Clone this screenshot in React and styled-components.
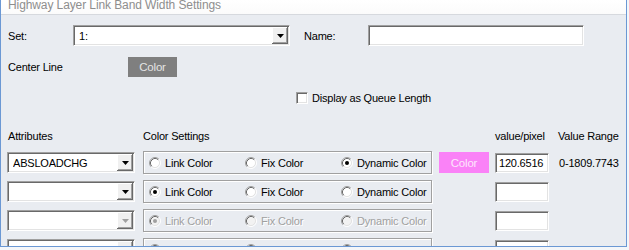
import React from "react";
import styled, { createGlobalStyle, css } from "styled-components";

const BG = "#e9ecf1";

const GlobalStyle = createGlobalStyle`
  html, body { margin: 0; padding: 0; }
  body {
    background: #f4f6f9;
    font-family: "Liberation Sans", Arial, sans-serif;
    font-size: 11px;
    letter-spacing: -0.2px;
    color: #000;
  }
`;

const Window = styled.div`
  box-sizing: border-box;
  width: 627px;
  height: 247px;
  border: 1px solid #6b98d4;
  border-top: none;
  display: flex;
  flex-direction: column;
  overflow: hidden;
`;

const TitleBar = styled.div`
  flex: 0 0 14px;
  height: 14px;
  overflow: hidden;
  padding-left: 7px;
  background: linear-gradient(#ffffff, #fbfbfb);
  border-bottom: 1px solid #d6d9de;
`;

const Title = styled.span`
  display: block;
  margin-top: -1px;
  font-size: 12px;
  line-height: 12px;
  letter-spacing: -0.1px;
  color: #8e8e8e;
  white-space: nowrap;
`;

const Body = styled.div`
  flex: 1;
  background: ${BG};
  padding: 10px 0 0 6px;
  overflow: hidden;
`;

const Row = styled.div`
  display: flex;
  align-items: center;
  height: ${(p) => p.$h || 21}px;
  margin-top: ${(p) => p.$mt || 0}px;
  padding-left: ${(p) => p.$pl || 0}px;
`;

const Label = styled.span`
  flex: 0 0 ${(p) => p.$w}px;
  margin-left: ${(p) => p.$ml || 0}px;
  padding-left: 1px;
  box-sizing: border-box;
  white-space: nowrap;
  color: ${(p) => (p.$disabled ? "#a0a0a0" : "#000")};
`;

const sunken = css`
  box-sizing: border-box;
  background: #fff;
  border: 1px solid;
  border-color: #a0a0a0 #ffffff #ffffff #a0a0a0;
  box-shadow: inset 1px 1px #696969, inset -1px -1px #e3e3e3;
`;

const ComboBox = styled.div`
  ${sunken};
  flex: 0 0 ${(p) => p.$w}px;
  width: ${(p) => p.$w}px;
  height: 21px;
  display: flex;
  align-items: center;
  padding: 1px 1px 1px 5px;
`;

const ComboText = styled.span`
  flex: 1;
  white-space: nowrap;
  overflow: hidden;
`;

const DropButton = styled.span`
  flex: 0 0 16px;
  height: 17px;
  background: #f0f0f0;
  box-shadow: inset -1px -1px #696969, inset 1px 1px #ffffff,
    inset -2px -2px #a0a0a0, inset 2px 2px #f0f0f0;
  display: flex;
  align-items: center;
  justify-content: center;
`;

const TextField = styled.div`
  ${sunken};
  flex: 0 0 ${(p) => p.$w}px;
  width: ${(p) => p.$w}px;
  height: ${(p) => p.$h || 21}px;
  padding: 0 0 0 3px;
  display: flex;
  align-items: center;
  white-space: nowrap;
`;

const ColorButton = styled.div`
  box-sizing: border-box;
  flex: 0 0 ${(p) => p.$w}px;
  width: ${(p) => p.$w}px;
  height: ${(p) => p.$h}px;
  background: ${(p) => p.$bg};
  color: ${(p) => p.$fg};
  display: flex;
  align-items: center;
  justify-content: center;
  font-size: 11.5px;
`;

const CheckBox = styled.span`
  ${sunken};
  flex: 0 0 12px;
  width: 12px;
  height: 12px;
  margin-right: 4px;
`;

const Grid = styled.div`
  display: grid;
  grid-template-columns: 136px 296px 56px 63px auto;
  align-items: center;
  height: ${(p) => p.$h}px;
  margin-top: ${(p) => p.$mt || 0}px;
`;

const HeaderCell = styled.span`
  grid-column: ${(p) => p.$col};
  padding-left: ${(p) => p.$pl || 0}px;
  white-space: nowrap;
`;

const Rows = styled.div`
  display: flex;
  flex-direction: column;
  gap: 6px;
  margin-top: 8px;
`;

const GroupBox = styled.div`
  box-sizing: border-box;
  width: 289px;
  height: 23px;
  border: 1px solid #a0a0a0;
  box-shadow: inset 1px 1px #ffffff, 1px 1px #ffffff;
  display: flex;
  align-items: center;
  padding-left: 5px;
`;

const Option = styled.label`
  flex: 0 0 96px;
  display: flex;
  align-items: center;
  white-space: nowrap;
  color: ${(p) => (p.$disabled ? "#a0a0a0" : "#000")};
  text-shadow: ${(p) => (p.$disabled ? "1px 1px #ffffff" : "none")};
  svg {
    flex: 0 0 12px;
    margin-right: 4px;
  }
`;

const Range = styled.span`
  white-space: nowrap;
  padding-left: 1px;
`;

const Arrow = ({ disabled }) => (
  <svg width="7" height="4" viewBox="0 0 7 4">
    <path d="M0 0H7L3.5 4Z" fill={disabled ? "#a0a0a0" : "#000"} />
  </svg>
);

const Radio = ({ checked, disabled }) => (
  <svg width="12" height="12" viewBox="0 0 12 12">
    <circle cx="6" cy="6" r="4.5" fill={disabled ? "#f2f2f2" : "#ffffff"} />
    <path d="M2.11 9.89A5.5 5.5 0 0 1 9.89 2.11" fill="none" stroke="#a0a0a0" />
    <path d="M2.82 9.18A4.5 4.5 0 0 1 9.18 2.82" fill="none" stroke="#696969" />
    <path d="M9.89 2.11A5.5 5.5 0 0 1 2.11 9.89" fill="none" stroke="#ffffff" />
    <path d="M9.18 2.82A4.5 4.5 0 0 1 2.82 9.18" fill="none" stroke="#e3e3e3" />
    {checked && <circle cx="6" cy="6" r="2" fill={disabled ? "#a0a0a0" : "#000"} />}
  </svg>
);

const rows = [
  { attr: "ABSLOADCHG", sel: 2, color: true, value: "120.6516", range: "0-1809.7743" },
  { attr: "", sel: 0 },
  { attr: "", sel: 0, disabled: true },
  { attr: "", sel: 0, disabled: true },
];

const options = ["Link Color", "Fix Color", "Dynamic Color"];

export default function App() {
  return (
    <>
      <GlobalStyle />
      <Window>
        <TitleBar>
          <Title>Highway Layer Link Band Width Settings</Title>
        </TitleBar>
        <Body>
          <Row>
            <Label $w={66}>Set:</Label>
            <ComboBox $w={217}>
              <ComboText>1:</ComboText>
              <DropButton>
                <Arrow />
              </DropButton>
            </ComboBox>
            <Label $w={65} $ml={13}>Name:</Label>
            <TextField $w={216} />
          </Row>
          <Row $mt={11} $h={20}>
            <Label $w={121}>Center Line</Label>
            <ColorButton $w={49} $h={20} $bg="#7f7f7f" $fg="#e4e4e4">
              Color
            </ColorButton>
          </Row>
          <Row $mt={15} $h={12} $pl={289}>
            <CheckBox />
            <span>Display as Queue Length</span>
          </Row>
          <Grid $h={14} $mt={25}>
            <HeaderCell $col="1" $pl={1}>Attributes</HeaderCell>
            <HeaderCell $col="2 / 4">Color Settings</HeaderCell>
            <HeaderCell $col="4">value/pixel</HeaderCell>
            <HeaderCell $col="5">Value Range</HeaderCell>
          </Grid>
          <Rows>
            {rows.map((r, i) => (
              <Grid key={i} $h={23}>
                <ComboBox $w={128}>
                  <ComboText>{r.attr}</ComboText>
                  <DropButton>
                    <Arrow disabled={r.disabled} />
                  </DropButton>
                </ComboBox>
                <GroupBox>
                  {options.map((o, j) => (
                    <Option key={o} $disabled={r.disabled}>
                      <Radio checked={r.sel === j} disabled={r.disabled} />
                      {o}
                    </Option>
                  ))}
                </GroupBox>
                <div>
                  {r.color && (
                    <ColorButton $w={50} $h={21} $bg="#fa82f7" $fg="#fde6fc">
                      Color
                    </ColorButton>
                  )}
                </div>
                <TextField $w={54} $h={20}>
                  {r.value}
                </TextField>
                <Range>{r.range}</Range>
              </Grid>
            ))}
          </Rows>
        </Body>
      </Window>
    </>
  );
}
